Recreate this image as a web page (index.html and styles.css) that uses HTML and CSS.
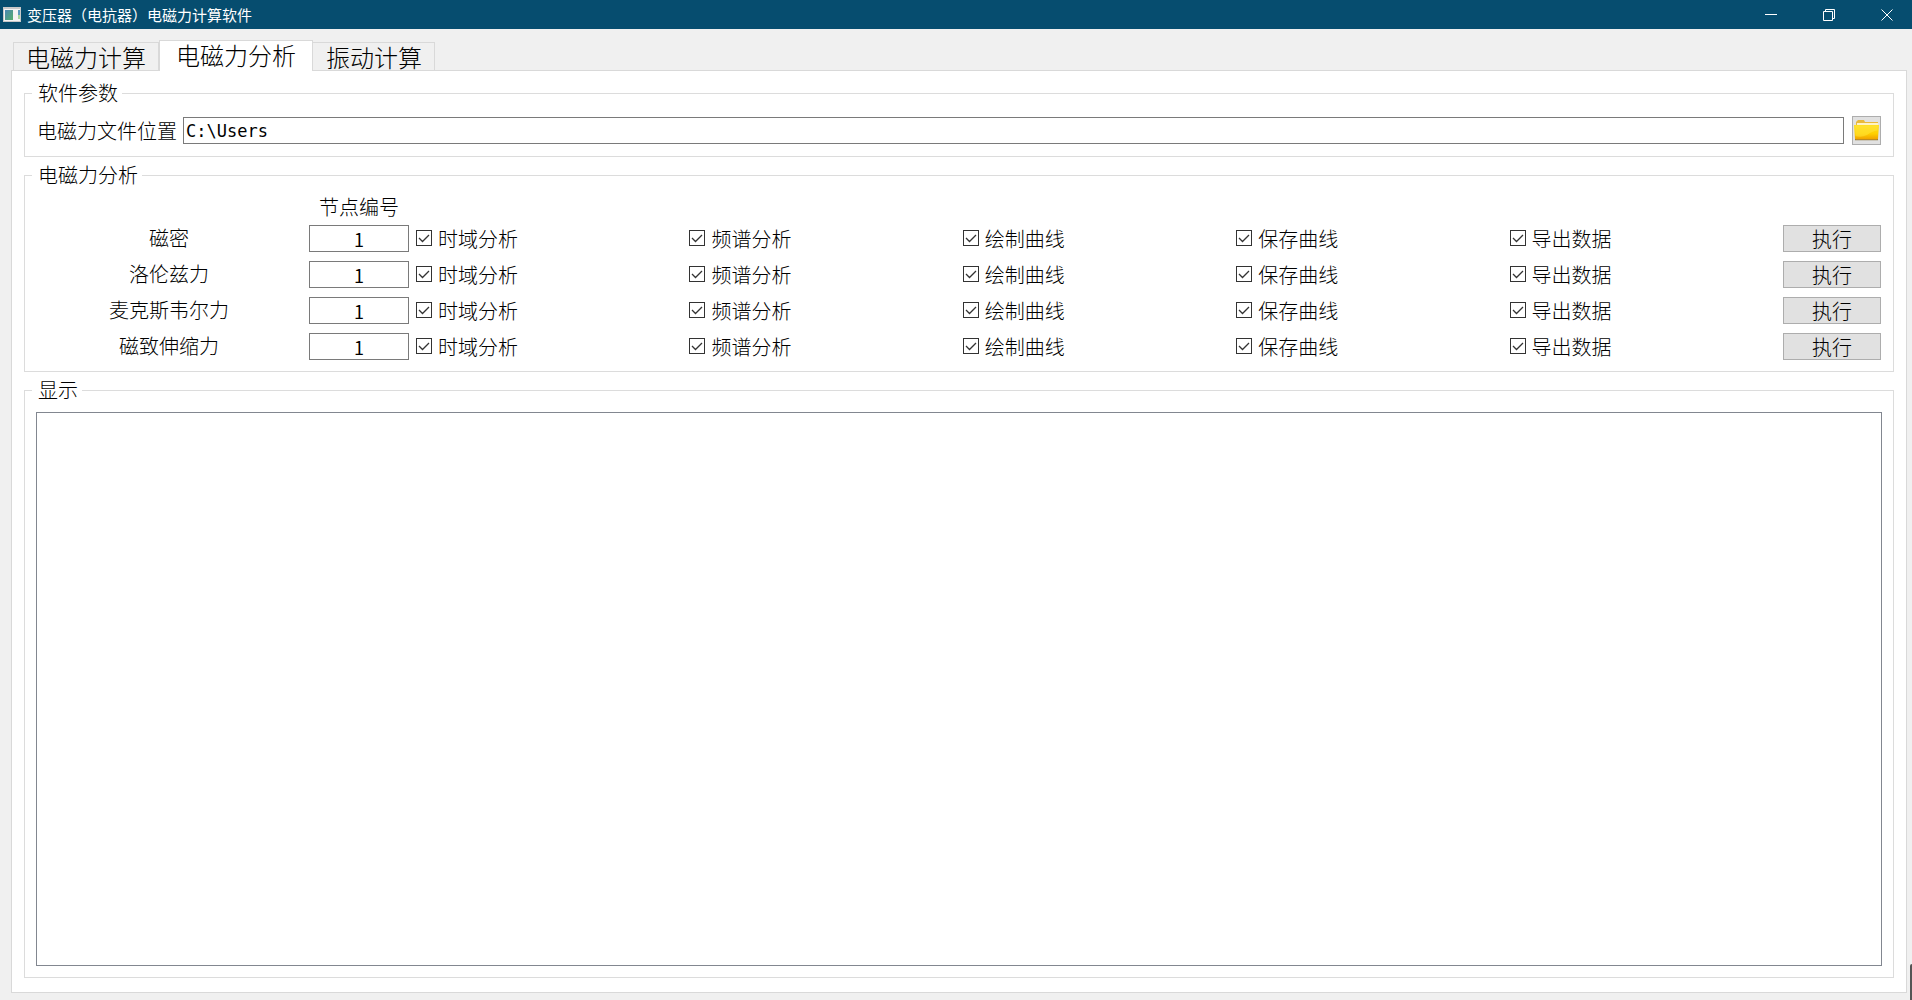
FILE: index.html
```html
<!DOCTYPE html>
<html lang="zh-CN">
<head>
<meta charset="utf-8">
<title>变压器（电抗器）电磁力计算软件</title>
<link rel="stylesheet" href="styles.css">
</head>
<body>
<header class="titlebar">
  <svg class="app-icon" width="18" height="15" viewBox="0 0 18 15" aria-hidden="true">
    <defs><linearGradient id="screen" x1="0" y1="0" x2="1" y2="1"><stop offset="0" stop-color="#4a86b4"/><stop offset="1" stop-color="#54b06c"/></linearGradient></defs>
    <rect width="18" height="15" fill="#c9c9c9"/>
    <rect x="1" y="2" width="16" height="12" fill="#f4f4f4"/>
    <rect x="2" y="3" width="8" height="10" fill="url(#screen)"/>
    <rect x="15" y="3" width="2" height="5" fill="#5b9bbd"/>
    <rect x="15" y="8" width="2" height="4" fill="#a9d8a0"/>
  </svg>
  <h1 class="title">变压器（电抗器）电磁力计算软件</h1>
  <div class="window-buttons">
    <button type="button" aria-label="最小化"><svg width="12" height="12" viewBox="0 0 12 12"><path d="M0 5.500h12"/></svg></button>
    <button type="button" aria-label="还原"><svg width="12" height="12" viewBox="0 0 12 12"><path d="M.5 2.500h9v9h-9zM2.500 2.500v-2h9v9h-2"/></svg></button>
    <button type="button" aria-label="关闭"><svg width="12" height="12" viewBox="0 0 12 12"><path d="M.5.5l11 11M11.500.5l-11 11"/></svg></button>
  </div>
</header>
<main class="window">
  <div class="tabs" role="tablist">
    <button type="button" class="tab" role="tab" aria-selected="false">电磁力计算</button>
    <button type="button" class="tab active" role="tab" aria-selected="true">电磁力分析</button>
    <button type="button" class="tab" role="tab" aria-selected="false">振动计算</button>
  </div>
  <div class="pane" role="tabpanel">
    <fieldset class="group">
      <legend>软件参数</legend>
      <div class="path-row">
        <label for="path">电磁力文件位置</label>
        <input id="path" class="field path" type="text" value="C:\Users">
        <button type="button" class="push browse" aria-label="浏览">
          <svg width="27" height="27" viewBox="0 0 27 27">
            <defs><linearGradient id="folder" x1="0" y1="0" x2="0" y2="1"><stop offset="0" stop-color="#ffdf20"/><stop offset=".6" stop-color="#ffd000"/><stop offset="1" stop-color="#f0a000"/></linearGradient></defs>
            <path d="M2 22.500h23" stroke="#8a7440" stroke-width="1.500"/>
            <path d="M3 9V5l2-2h6l1 2h13v6H3z" fill="#e9b93a"/>
            <path d="M4 6h21v4H4z" fill="#fff3c4"/>
            <path d="M1 8h25l-1 13.500q0 1-1 1H3q-1 0-1-1z" fill="url(#folder)"/>
            <path d="M2 8.500h23l-.4 5Q19 14 14 18 8 21 2.500 19z" fill="#ffe640" opacity=".5"/>
          </svg>
        </button>
      </div>
    </fieldset>

    <fieldset class="group">
      <legend>电磁力分析</legend>
      <div class="analysis">
        <div class="row heading"><span class="column-title">节点编号</span></div>
        <div class="row">
          <label class="name" for="n1">磁密</label>
          <input id="n1" class="field node" type="text" value="1">
          <label class="check"><input type="checkbox" checked>时域分析</label>
          <label class="check"><input type="checkbox" checked>频谱分析</label>
          <label class="check"><input type="checkbox" checked>绘制曲线</label>
          <label class="check"><input type="checkbox" checked>保存曲线</label>
          <label class="check"><input type="checkbox" checked>导出数据</label>
          <button type="button" class="push">执行</button>
        </div>
        <div class="row">
          <label class="name" for="n2">洛伦兹力</label>
          <input id="n2" class="field node" type="text" value="1">
          <label class="check"><input type="checkbox" checked>时域分析</label>
          <label class="check"><input type="checkbox" checked>频谱分析</label>
          <label class="check"><input type="checkbox" checked>绘制曲线</label>
          <label class="check"><input type="checkbox" checked>保存曲线</label>
          <label class="check"><input type="checkbox" checked>导出数据</label>
          <button type="button" class="push">执行</button>
        </div>
        <div class="row">
          <label class="name" for="n3">麦克斯韦尔力</label>
          <input id="n3" class="field node" type="text" value="1">
          <label class="check"><input type="checkbox" checked>时域分析</label>
          <label class="check"><input type="checkbox" checked>频谱分析</label>
          <label class="check"><input type="checkbox" checked>绘制曲线</label>
          <label class="check"><input type="checkbox" checked>保存曲线</label>
          <label class="check"><input type="checkbox" checked>导出数据</label>
          <button type="button" class="push">执行</button>
        </div>
        <div class="row">
          <label class="name" for="n4">磁致伸缩力</label>
          <input id="n4" class="field node" type="text" value="1">
          <label class="check"><input type="checkbox" checked>时域分析</label>
          <label class="check"><input type="checkbox" checked>频谱分析</label>
          <label class="check"><input type="checkbox" checked>绘制曲线</label>
          <label class="check"><input type="checkbox" checked>保存曲线</label>
          <label class="check"><input type="checkbox" checked>导出数据</label>
          <button type="button" class="push">执行</button>
        </div>
      </div>
    </fieldset>

    <fieldset class="group display">
      <legend>显示</legend>
      <textarea class="output" aria-label="显示"></textarea>
    </fieldset>
  </div>
</main>
<div class="edge-widget"></div>
</body>
</html>
```
FILE: styles.css
```css
* {
  box-sizing: border-box;
}

body {
  margin: 0;
  height: 100vh;
  min-height: 680px;
  display: flex;
  flex-direction: column;
  background: #f0f0f0;
  color: #000;
  font: 300 20px/23px KaiTi, "Noto Sans CJK SC", sans-serif;
}

button,
input,
textarea {
  margin: 0;
  font: inherit;
  color: inherit;
  border-radius: 0;
}

/* Title bar */
.titlebar {
  display: flex;
  align-items: center;
  height: 29px;
  padding: 0 2px 0 3px;
  background: #064d6f;
  color: #fff;
}

.title {
  margin: 0 auto 0 6px;
  font: 400 15px/29px "Noto Sans CJK SC", sans-serif;
}

.window-buttons {
  display: flex;
  gap: 12px;
}

.window-buttons button {
  display: flex;
  align-items: center;
  justify-content: center;
  width: 46px;
  height: 29px;
  padding: 0;
  border: 0;
  background: none;
}

.window-buttons svg {
  fill: none;
  stroke: #fff;
}

/* Tabs */
.window {
  flex: 1;
  min-height: 0;
  display: flex;
  flex-direction: column;
  padding: 11px 5px 7px 11px;
}

.tabs {
  display: flex;
  align-items: flex-end;
  padding-left: 2px;
}

.tab {
  height: 28px;
  padding: 0 12px;
  border: 1px solid #d9d9d9;
  border-bottom: 0;
  background: #f0f0f0;
  font-size: 24px;
  line-height: 24px;
}

.tab.active {
  position: relative;
  height: 31px;
  margin-bottom: -1px;
  padding: 0 16px 2px;
  background: #fff;
}

.tab + .tab:not(.active) {
  border-left: 0;
  padding-left: 13px;
}

.pane {
  flex: 1;
  min-height: 0;
  display: flex;
  flex-direction: column;
  gap: 7px;
  padding: 11px 12px 14px;
  border: 1px solid #d9d9d9;
  background: #fff;
}

/* Group boxes */
.group {
  min-width: 0;
  margin: 0;
  padding: 11px;
  border: 1px solid #dcdcdc;
}

.group legend {
  margin-left: -4px;
  padding: 0 4px 2px 6px;
  line-height: 21px;
}

.field {
  min-width: 0;
  height: 27px;
  padding: 0 2px;
  border: 1px solid #7a7a7a;
  background: #fff;
}

.push {
  height: 27px;
  padding: 0;
  border: 1px solid #adadad;
  background: #e1e1e1;
}

.path-row {
  display: flex;
  align-items: center;
  padding: 0 1px;
}

.path {
  flex: 1;
  margin: 0 8px 0 6px;
  font: 17px/25px "DejaVu Sans Mono", monospace;
}

.browse {
  width: 29px;
  height: 29px;
}

.browse svg {
  display: block;
}

/* Analysis rows */
.analysis {
  display: flex;
  flex-direction: column;
  gap: 9px;
  padding-right: 1px;
}

.row {
  display: grid;
  grid-template-columns: 266px 100px repeat(5, minmax(120px, 1fr)) 98px;
  column-gap: 7px;
  align-items: center;
}

.heading {
  line-height: 18px;
}

.column-title {
  grid-column: 2;
  text-align: center;
}

.name {
  text-align: center;
}

.node {
  text-align: center;
  font: 18px/25px "Noto Sans CJK SC", sans-serif;
}

.name,
.check {
  height: 27px;
  line-height: 25px;
}

.check {
  display: flex;
  align-items: center;
  gap: 6px;
  padding-bottom: 1px;
}

.check input {
  appearance: none;
  width: 16px;
  height: 16px;
  border: 1px solid #333;
  background: #fff;
}

.check input:checked {
  background: #fff url("data:image/svg+xml,%3Csvg xmlns='http://www.w3.org/2000/svg' viewBox='0 0 14 14'%3E%3Cpath d='M2 7l3.500 3.500L12 4' fill='none' stroke='%23333' stroke-width='1.300'/%3E%3C/svg%3E");
}

/* Output */
.display {
  flex: 1;
  min-height: 0;
  padding-top: 10px;
}

.output {
  display: block;
  width: 100%;
  height: 100%;
  padding: 4px;
  border: 1px solid #828790;
  background: #fff;
  resize: none;
}

/* Docked widget peeking in from the screen edge */
.edge-widget {
  position: fixed;
  right: 0;
  bottom: 0;
  width: 2px;
  height: 36px;
  border-top-left-radius: 2px;
  background: #555;
}
```
